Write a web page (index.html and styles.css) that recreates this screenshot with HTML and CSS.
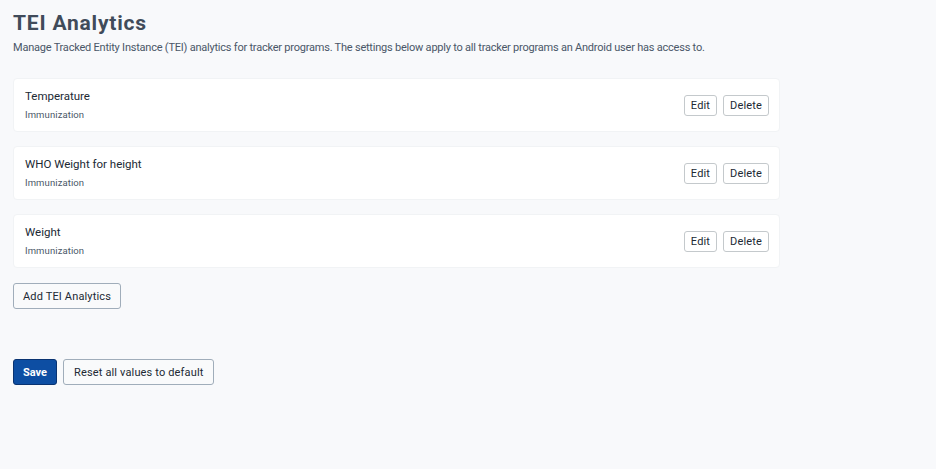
FILE: index.html
```html
<!DOCTYPE html>
<html>
<head>
<meta charset="utf-8">
<link rel="stylesheet" href="styles.css">
</head>
<body>
<div class="page">
  <h1 class="title">TEI Analytics</h1>
  <p class="desc">Manage Tracked Entity Instance (TEI) analytics for tracker programs. The settings below apply to all tracker programs an Android user has access to.</p>
  <div class="list">
    <div class="card">
      <div class="info">
        <div class="name">Temperature</div>
        <div class="sub">Immunization</div>
      </div>
      <div class="actions">
        <button class="btn small">Edit</button>
        <button class="btn small">Delete</button>
      </div>
    </div>
    <div class="card">
      <div class="info">
        <div class="name">WHO Weight for height</div>
        <div class="sub">Immunization</div>
      </div>
      <div class="actions">
        <button class="btn small">Edit</button>
        <button class="btn small">Delete</button>
      </div>
    </div>
    <div class="card">
      <div class="info">
        <div class="name">Weight</div>
        <div class="sub">Immunization</div>
      </div>
      <div class="actions">
        <button class="btn small">Edit</button>
        <button class="btn small">Delete</button>
      </div>
    </div>
  </div>
  <button class="btn add">Add TEI Analytics</button>
  <div class="footer">
    <button class="btn primary">Save</button>
    <button class="btn">Reset all values to default</button>
  </div>
</div>
</body>
</html>
```
FILE: styles.css
```css
html, body {
  margin: 0;
  padding: 0;
  background: #f8f9fb;
  font-family: Roboto, "Liberation Sans", sans-serif;
  color: #212934;
}
.page {
  padding: 10px 13px;
  width: 767px;
}
.title {
  margin: 0;
  font-size: 21px;
  line-height: 26px;
  font-weight: 700;
  letter-spacing: 0.8px;
  color: #404b5a;
}
.desc {
  margin: 5px 0 0;
  font-size: 11px;
  line-height: 14px;
  letter-spacing: -0.22px;
  color: #4a5768;
}
.list {
  margin-top: 23px;
  display: flex;
  flex-direction: column;
  gap: 14px;
}
.card {
  background: #fff;
  border: 1px solid #f1f3f5;
  border-radius: 4px;
  height: 54px;
  box-sizing: border-box;
  padding: 0 10px 0 11px;
  display: flex;
  align-items: center;
  justify-content: space-between;
}
.name {
  font-size: 11.5px;
  font-weight: 400;
  line-height: 14px;
  letter-spacing: 0;
  color: #212934;
}
.sub {
  margin-top: 6px;
  font-size: 9.5px;
  line-height: 12px;
  letter-spacing: 0.1px;
  color: #4a5768;
}
.actions {
  display: flex;
  gap: 6px;
}
.btn {
  font-family: inherit;
  font-size: 11px;
  letter-spacing: 0.15px;
  color: #212934;
  background: #f9fafb;
  border: 1px solid #a0adba;
  border-radius: 3px;
  height: 26px;
  padding: 0 10px;
  cursor: pointer;
}
.btn.small {
  height: 21px;
  padding: 0 6px;
  border-color: #c4c9cc;
  background: #fff;
}
.btn.add {
  margin-top: 15px;
  padding: 0 9px;
}
.footer {
  margin-top: 50px;
  display: flex;
  gap: 6px;
}
.btn.primary {
  background: #0d4ea3;
  border-color: #093371;
  color: #fff;
  font-weight: 700;
  letter-spacing: 0;
  padding: 0 9px;
}
```
